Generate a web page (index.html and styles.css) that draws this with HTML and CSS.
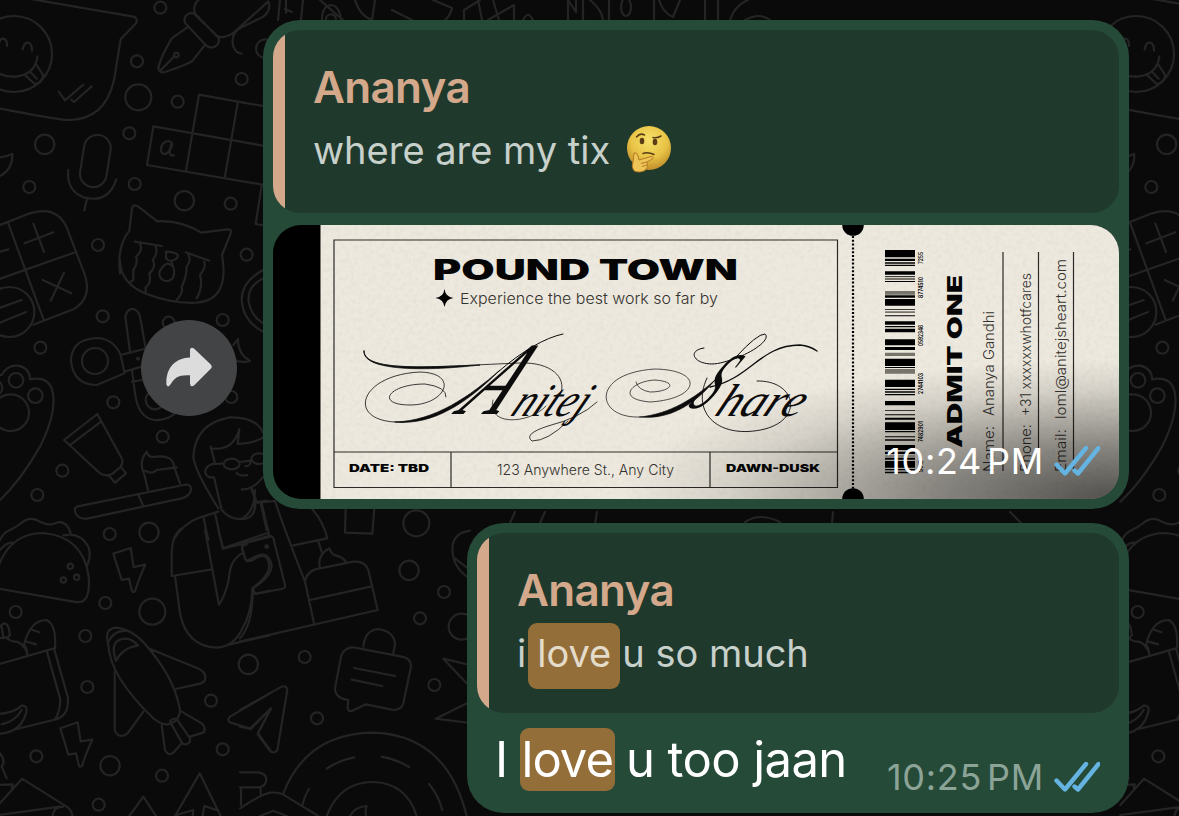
FILE: index.html
```html
<!DOCTYPE html>
<html lang="en">
<head>
<meta charset="utf-8">
<title>Chat</title>
<link rel="stylesheet" href="styles.css">
</head>
<body>
<svg class="wallpaper" viewBox="0 0 1179 816" aria-hidden="true">
  <defs>
    <g id="doodles">
      <g transform="scale(.33333)">
        <path d="M80-5L400 50Q415 55 408 70L362 118L342 240Q315 362 200 360Q180 360 0 326"/>
        <circle cx="42" cy="162" r="114"/>
        <path d="M-30 200Q0 232 45 230Q105 225 112 170M-5 140Q-2 115 10 116Q22 118 21 138M68 148Q72 126 84 128Q96 130 96 152M76 226L104 252Q125 252 130 226L108 192M90 215L110 236M176 275L195 301L250 254M214 299L222 306L275 259"/>
        <circle cx="481" cy="23" r="18"/><circle cx="411" cy="184" r="18"/><circle cx="415" cy="292" r="39"/><circle cx="533" cy="305" r="18"/><circle cx="725" cy="237" r="18"/><circle cx="388" cy="400" r="18"/><circle cx="134" cy="433" r="29"/><circle cx="88" cy="561" r="18"/><circle cx="404" cy="552" r="18"/><circle cx="553" cy="602" r="29"/><circle cx="692" cy="611" r="18"/><circle cx="294" cy="735" r="18"/><circle cx="740" cy="764" r="18"/><circle cx="796" cy="146" r="28"/>
        <path d="M562 82L515 115Q478 180 475 205Q478 220 495 216Q560 195 578 182L613 137M482 211L524 168M584 43Q570 34 558 47Q550 60 556 70L620 138Q640 150 655 130Q660 118 652 108ZM598-3Q575 18 586 42L650 108Q680 120 712 88L805 4Q815 30 790 50L725 82Q690 100 700 140Q708 160 725 161"/>
        <circle cx="529" cy="165" r="7"/>
        <path d="M597 284L800 320M460 379L800 439M441 495L800 556M460 379L441 495M597 284L558 512M714 304L674 534M785 556L767 672L800 678M483 448Q485 425 505 423Q525 428 510 450Q490 475 482 450M516 428Q500 470 521 466"/>
        <rect x="246" y="404" width="80" height="158" rx="40" transform="rotate(9 286 483)"/>
        <path d="M205 510Q198 570 250 592Q325 612 349 538M260 600L253 631M0 472Q20 470 37 462Q38 510 0 528"/>
        <path d="M-5 677L90 640Q170 615 200 682L247 805Q285 890 220 928L100 974M24 668L130 957M-5 838L222 758M100 671L132 756M74 730L160 697M0 755L25 748"/>
        <path d="M360 820Q350 740 388 692L396 625Q400 610 415 620L472 664Q540 660 604 698L682 688Q697 688 692 700L666 765Q690 900 590 908Q520 912 440 882Q360 850 360 780M404 725L486 738M420 732Q430 750 408 770Q415 790 400 810L400 840L388 848M467 740Q475 760 458 780Q470 800 448 820Q455 850 437 862V880M557 757L628 782M565 765Q575 780 560 800Q560 830 545 860Q550 880 530 900M612 785Q620 800 600 825Q610 860 590 895M498 755Q545 758 530 775Q510 790 498 775ZM485 805Q500 780 520 800M515 788Q525 815 522 820A22 22 0 1 1 485 805"/>
      </g>
      <g transform="translate(0 260) scale(.33333)">
        <path d="M128 60L214 100M192 38L152 122"/>
        <circle cx="28" cy="156" r="75"/><path d="M-5 145L65 120M-5 190L78 156"/>
        <circle cx="308" cy="169" r="18"/><circle cx="121" cy="263" r="18"/><circle cx="340" cy="427" r="18"/><circle cx="668" cy="180" r="18"/><circle cx="506" cy="188" r="18"/><circle cx="488" cy="530" r="18"/><circle cx="187" cy="632" r="18"/><circle cx="112" cy="705" r="18"/><circle cx="694" cy="411" r="18"/><circle cx="447" cy="817" r="29"/><circle cx="329" cy="822" r="18"/>
        <circle cx="285" cy="303" r="39"/>
        <path d="M362 285Q340 235 290 234Q212 238 213 305Q222 375 290 375L374 340ZM362 285L440 265M374 335L425 320M390 275L376 170Q382 145 400 147Q418 150 422 180L436 260M396 330L405 400Q415 475 465 480Q500 482 525 460M396 365L425 360"/>
        <circle cx="414" cy="296" r="3"/><circle cx="465" cy="420" r="28"/>
        <path d="M-5 345L5 345Q20 315 55 317Q90 325 90 358Q155 345 160 410Q165 470 120 560Q60 665-5 725"/>
        <circle cx="48" cy="361" r="22"/><circle cx="106" cy="407" r="22"/><circle cx="32" cy="458" r="55"/><circle cx="-15" cy="383" r="22"/>
        <path d="M292 462L192 540L300 640Q315 650 335 643L360 622Q372 608 365 595ZM300 487L213 553M325 645L345 668L378 640L362 620M230 740L550 675Q575 670 573 690Q570 708 545 715L265 775Q240 780 228 762Q220 745 230 740M415 705L430 738M444 690L432 640Q415 605 440 575Q445 595 470 590Q520 585 522 620L540 670M436 632Q455 645 470 630L530 622"/>
        <path d="M800 25Q725 60 725 120Q730 190 800 220M800 50Q740 75 746 125Q755 175 800 195M714 237Q712 280 750 303Q725 310 705 300M714 237L700 255"/>
        <path d="M632 560L645 610Q618 615 615 635Q620 655 642 652L665 750Q695 785 740 775Q770 765 765 720L757 688M632 565Q700 575 718 507L713 552Q770 550 800 525M790 520Q770 470 690 472Q585 490 580 590Q585 635 655 745M645 612L672 610M718 606L754 602M736 618Q750 620 752 605M710 638Q715 650 742 645M725 688Q760 690 790 650"/>
        <ellipse cx="695" cy="612" rx="24" ry="16"/><ellipse cx="778" cy="596" rx="24" ry="16"/>
        <path d="M520 840Q550 790 600 772L655 755M610 770L625 840M645 760L668 865L800 820M765 728L800 722M782 730L800 810"/>
      </g>
      <g transform="translate(0 530) scale(.33333)">
        <path d="M-5 110Q30 10 130 9Q250 20 266 140Q270 190 255 208Q245 220 220 215L-5 176M0 30Q10 8 30 0Q50-10 60-18Q90-45 120-25Q150-10 170-22Q200-30 212 10M190 16Q240 5 265 50Q275 75 262 105M0 60Q20 35 40 38"/>
        <circle cx="211" cy="109" r="8"/><circle cx="230" cy="142" r="8"/><circle cx="190" cy="150" r="8"/>
        <circle cx="47" cy="246" r="18"/><circle cx="316" cy="219" r="18"/><circle cx="457" cy="245" r="39"/><circle cx="256" cy="318" r="18"/><circle cx="262" cy="471" r="18"/><circle cx="633" cy="512" r="18"/><circle cx="745" cy="403" r="29"/><circle cx="668" cy="658" r="18"/><circle cx="109" cy="679" r="18"/><circle cx="330" cy="707" r="29"/><circle cx="486" cy="737" r="18"/><circle cx="296" cy="824" r="18"/>
        <path d="M340 71L392 54L401 111L436 104Q415 150 405 184Q396 190 394 175L387 146L365 150Z"/>
        <path d="M181 595L233 577L242 634L277 629Q256 675 246 708Q237 715 235 700L228 670L205 674Z"/>
        <path d="M-5 403L162 355L203 500Q210 560 160 570L50 597M140 362L180 505Q183 540 165 568M72 345Q90 270 140 270Q170 285 165 355M72 345Q80 350 82 375M92 298L118 307M80 335L108 343M-5 325L20 322Q30 335 50 335Q70 340 82 370M0 290Q15 270 25 290L30 315L20 325M5 290L10 322M-5 552Q40 550 65 527Q85 525 78 550Q60 610-5 611M5 583Q45 575 65 540"/>
        <path d="M325 345Q310 295 350 293Q405 300 450 360Q525 450 540 540Q540 570 510 582Q490 588 460 565Q330 440 325 345ZM325 335Q345 300 375 303M348 393Q325 325 380 326Q400 330 414 346Q365 355 348 393ZM445 355L600 418Q620 430 615 450Q610 460 590 463L528 477M344 425V600Q350 620 370 617Q380 615 385 607L430 545M485 585L495 660Q505 680 520 668L545 640M545 545L605 580Q620 595 610 608L570 620M510 575Q520 560 532 570L570 625Q572 640 558 643Q548 644 544 635Z"/>
        <path d="M515 138V75Q515 15 545-5M515 138L635 118M525 138L540 250Q560 350 650 353Q700 350 725 300Q755 250 757 180M615 0L657 225Q685 180 690 120Q700 80 730 68M655 0L670 56L810 20M740 43Q720 45 728 65L738 92Q750 98 770 83Q805 65 808 110Q805 140 757 175L765 192L810 182M690 343L810 316"/>
        <path d="M810 490L690 560Q680 570 690 577L750 596L810 538M810 540L774 610L810 660M-5 665Q20 690 5 710L20 745M-5 765L38 763L36 775M-5 825L66 746L200 830Q215 840 218 860M-5 855L180 830M157 860Q160 830 190 830M388 858L430 800L468 858M525 858L599 730L662 858M530 855L580 840L578 858M608 858L613 828L655 842"/>
      </g>
      <g transform="translate(240 490) scale(.33333)">
        <path d="M35 0L52 38L105 33Q130 110 195 275L222 400M65 40L88 138M0 88Q45 70 45 0M215 55Q250 95 262 145L160 166M235 155L245 185M240 235Q230 195 268 175Q275 195 290 197Q315 205 318 218M195 275Q200 240 240 235L340 215Q375 212 385 240L413 360L0 455M210 330L395 289M317 55L315 128L397 131L403 55M10 160L85 138Q95 135 100 145L135 285Q138 295 125 297L45 312L38 295Q95 260 95 225Q85 180 45 200L20 213Q15 210 5 165M38 295Q40 400 0 445"/>
        <circle cx="80" cy="170" r="4"/><circle cx="529" cy="100" r="39"/><circle cx="507" cy="241" r="29"/><circle cx="612" cy="306" r="18"/><circle cx="540" cy="385" r="18"/><circle cx="194" cy="501" r="18"/><circle cx="583" cy="585" r="18"/><circle cx="231" cy="685" r="18"/><circle cx="665" cy="410" r="39"/>
        <path d="M690 122Q630 130 638 190Q645 240 690 265M645 205L690 240M370 470Q375 420 415 417Q465 425 465 465L460 490M340 472L485 500Q515 505 513 530L490 640Q485 660 460 660L378 643L335 663Q322 665 323 650L325 630Q285 625 285 595L303 500Q310 475 335 472ZM342 534L466 558M335 569L427 588M690 525L610 506L690 590M690 635L587 686L690 699"/>
        <path d="M0 660L125 590Q140 585 142 600L112 780Q100 795 88 780L53 732L93 655L32 717L0 710M130 910Q200 730 400 728Q620 735 680 978M260 978Q300 875 400 876Q500 880 530 978M260 836Q300 810 343 802M425 800Q475 810 507 831M567 882Q595 915 607 960M207 897Q195 915 188 943M330 978Q345 950 380 948Q375 960 378 978M0 847H55Q78 850 79 868Q78 890 55 892H0M3 892V945M62 892V915M0 955Q60 915 90 908Q120 905 140 920L235 978M60 978L100 962L140 978"/>
      </g>
      <path d="M278 20L280 0M301 20L303 0M320 0Q338 16 343 20M322 20Q322 5 332 5Q340 7 341 20M326 20A5 5 0 0 1 336 19M355 0Q360 16 372 20L375 0M392 10L412 20M433 0L452 8Q450 16 445 20M464 20V10L480 0M478 0L482 20M493 0L499 20M488 20L514 5V20M523 20Q528 10 533 20M568 20V0L576 12V0M583 0V20M590 0Q602 10 603 20M609 20V0M654 20V0M659 0Q663 13 673 17L680 0M705 20V0M718 20V0M730 20Q735 5 748 0M745 20Q760 12 770 20M286 0V13M285 9L292 12"/>
      <ellipse cx="626" cy="7" rx="5" ry="9"/>
      <path d="M510 523L515 512M540 523L545 512M595 524L597 512M745 522Q760 512 780 522M832 524L833 512M1010 512L1022 524"/>
    </g>
  </defs>
  <use href="#doodles"/>
  <use href="#doodles" x="1122"/>
</svg>

<main class="chat">
  <div class="row">
    <button class="forward" aria-label="Forward">
      <svg width="46" height="40" viewBox="0 0 46 40"><path d="M24 3Q24.500-.8 28 1.500L44.500 17.300Q47 20 44.500 22L28.500 38Q24.500 41 24 36.500V28.300C13 27.500 8 31 4.800 37Q2 41.500.4 37.500C-.3 21 9 11 24 10.500Z"/></svg>
    </button>
    <article class="bubble bubble-media">
      <section class="quote">
        <h2 class="author">Ananya</h2>
        <p class="quoted">where are my tix
          <svg class="emoji" viewBox="0 0 46 48" role="img" aria-label="thinking face">
            <defs><radialGradient id="skin" cx=".5" cy=".32" r=".68"><stop offset="0" stop-color="#f6e06a"/><stop offset=".6" stop-color="#e8c345"/><stop offset="1" stop-color="#c08d2b"/></radialGradient></defs>
            <circle cx="23" cy="23" r="22" fill="url(#skin)"/>
            <path d="M10.500 12Q14 7.500 18.500 10M27 12.500Q31 13.500 35 11" class="face-line"/>
            <ellipse cx="16" cy="16" rx="2.300" ry="3.300" fill="#5b3c14"/><ellipse cx="29" cy="17" rx="2.300" ry="3.300" fill="#5b3c14"/>
            <path d="M17 28.500Q22 26.500 28 29.500" class="face-line"/>
            <path d="M8 28Q11 27 12 31L13 35L25 31.500Q28 31.500 26.500 34L21 37Q23 42 19 45.500Q14 48 9 46.500Q5 43 7 37Z" fill="#edc456" stroke="#b47a25" stroke-width="1"/>
            <path d="M15 38.500L21 37M16 41.500L21 40" stroke="#b47a25" fill="none"/>
          </svg>
        </p>
      </section>
      <figure class="photo">
        <svg class="ticket" viewBox="273 225 846 274">
          <defs>
            <filter id="grain" x="0" y="0" width="100%" height="100%">
              <feTurbulence type="fractalNoise" baseFrequency=".22" numOctaves="3" seed="4"/>
              <feColorMatrix values="0 0 0 0 .45  0 0 0 0 .4  0 0 0 0 .3  0 .9 0 0 -.36"/>
            </filter>
          </defs>
          <rect x="273" y="225" width="846" height="274" fill="#000"/>
          <rect x="320.500" y="225" width="800" height="274" fill="#ede9df"/>
          <rect x="320.500" y="225" width="800" height="274" filter="url(#grain)" opacity=".25"/>
          <path d="M334 240H837.500V487.500H334ZM334 452H837.500M451 452V487.500M710 452V487.500" class="rule"/>
          <text x="433" y="279.500" font-size="28.500" textLength="305" lengthAdjust="spacingAndGlyphs" class="wide">POUND TOWN</text>
          <path d="M444.500 289Q445.500 297 453.500 298Q445.500 299 444.500 307Q443.500 299 435.500 298Q443.500 297 444.500 289Z"/>
          <text x="460" y="304" font-size="15" textLength="258" lengthAdjust="spacingAndGlyphs" class="light">Experience the best work so far by</text>
          <g class="flourish">
            <path d="M364 351C364 374 440 366 520 363C552 362 566 378 561 392" stroke-width=".8"/>
            <path d="M364 351C363 372 430 367 480 365C430 371 362 372 364 351Z" class="swell"/>
            <path d="M404 422C345 425 356 375 420 372C460 373 446 405 410 405C375 405 388 384 425 384Q447 387 446 397" stroke-width=".8"/>
            <path d="M395 422C435 421 470 396 500 370C470 400 435 426 395 422Z" class="swell"/>
            <path d="M498 372Q535 340 563 334" stroke-width="1"/>
            <path d="M493 400C486 427 530 424 546 406" stroke-width=".7"/>
            <path d="M568 421Q548 441 532 441Q523 434 548 426Q580 418 597 402" stroke-width=".8"/>
            <path d="M640 417C595 419 590 373 655 369C705 370 700 399 650 402C615 399 632 381 655 380C680 382 670 392 650 392Q638 390 636 382" stroke-width=".7"/>
            <path d="M640 417C670 414 695 398 715 380C695 404 670 420 640 417Z" class="swell"/>
            <path d="M704 348C683 351 698 370 724 362C748 356 772 340 765 334Q757 334 736 357" stroke-width="1"/>
            <path d="M710 387C750 379 760 345 800 345Q810 346 817 351" stroke-width="1.300"/>
            <path d="M707 378C690 414 720 440 765 429C805 418 795 380 757 381" stroke-width=".9"/>
          </g>
          <g class="script">
            <text transform="translate(455 414) skewX(-38)" font-size="104" textLength="42" lengthAdjust="spacingAndGlyphs">A</text>
            <text transform="translate(509 416) skewX(-28)" font-size="47" textLength="73" lengthAdjust="spacingAndGlyphs">nitej</text>
            <text transform="translate(686 408) skewX(-38)" font-size="80" textLength="20" lengthAdjust="spacingAndGlyphs">S</text>
            <text transform="translate(713 416) skewX(-26)" font-size="46" textLength="86" lengthAdjust="spacingAndGlyphs">hare</text>
          </g>
          <text x="349" y="472.300" font-size="10.500" textLength="80" lengthAdjust="spacingAndGlyphs" class="wide">DATE: TBD</text>
          <text x="497" y="474.500" font-size="14.500" textLength="177" lengthAdjust="spacingAndGlyphs" class="light">123 Anywhere St., Any City</text>
          <text x="726" y="472.300" font-size="10.500" textLength="94" lengthAdjust="spacingAndGlyphs" class="wide">DAWN-DUSK</text>
          <path d="M853 236V489" stroke="#000" stroke-width="2.200" stroke-dasharray="2 1.800"/>
          <circle cx="853" cy="225" r="10.800"/><circle cx="853" cy="499" r="10.800"/>
          <g transform="translate(885 225) scale(.33333)">
            <path d="M0 75h90v22H0zM0 101h90v7H0zM0 112h90v4H0zM0 119h90v4H0zM0 139h90v10H0zM0 153h90v2H0zM0 168h90v3H0zM0 211h90v7H0zM0 222h90v20H0zM0 252h90v2H0zM0 271h90v3H0zM0 289h90v10H0zM0 303h90v4H0zM0 311h90v11H0zM0 343h90v18H0zM0 366h90v9H0zM0 401h90v22H0zM0 426h90v3H0zM0 464h90v22H0zM0 491h90v4H0zM0 499h90v4H0zM0 507h90v4H0zM0 528h90v13H0zM0 556h90v2H0zM0 568h90v3H0zM0 578h90v6H0zM0 592h90v23H0zM0 618h90v4H0zM0 634h90v3H0zM0 643h90v4H0zM0 660h90v15H0zM0 680h90v7H0zM0 692h90v2H0zM0 698h90v6H0zM0 708h90v20H0zM0 732h90v4H0zM0 740h90v5H0z"/>
            <path d="M0 158h90v7H0zM0 198h90v11H0zM0 259h90v5H0zM0 383h90v10H0zM0 432h90v14H0z" fill="#77746c"/>
          </g>
          <g class="serial" font-size="6">
            <text transform="translate(922.500 264) rotate(-90)" textLength="12" lengthAdjust="spacingAndGlyphs">7255</text>
            <text transform="translate(922.500 298) rotate(-90)" textLength="21" lengthAdjust="spacingAndGlyphs">8774510</text>
            <text transform="translate(922.500 346) rotate(-90)" textLength="21" lengthAdjust="spacingAndGlyphs">0592346</text>
            <text transform="translate(922.500 394) rotate(-90)" textLength="21" lengthAdjust="spacingAndGlyphs">2744103</text>
            <text transform="translate(922.500 442) rotate(-90)" textLength="21" lengthAdjust="spacingAndGlyphs">7482901</text>
            <text transform="translate(922.500 472) rotate(-90)" textLength="12" lengthAdjust="spacingAndGlyphs">9012</text>
          </g>
          <text transform="translate(961.500 448) rotate(-90)" font-size="20.500" textLength="173" lengthAdjust="spacingAndGlyphs" class="wide">ADMIT ONE</text>
          <g class="light" font-size="14.500">
            <text transform="translate(994 472) rotate(-90)" textLength="46" lengthAdjust="spacingAndGlyphs">Name:</text>
            <text transform="translate(994 416) rotate(-90)" textLength="105" lengthAdjust="spacingAndGlyphs">Ananya Gandhi</text>
            <text transform="translate(1031 472) rotate(-90)" textLength="48" lengthAdjust="spacingAndGlyphs">Phone:</text>
            <text transform="translate(1031 416) rotate(-90)" textLength="143" lengthAdjust="spacingAndGlyphs">+31 xxxxxxwhotfcares</text>
            <text transform="translate(1066 472) rotate(-90)" textLength="43" lengthAdjust="spacingAndGlyphs">Email:</text>
            <text transform="translate(1066 419) rotate(-90)" textLength="160" lengthAdjust="spacingAndGlyphs">loml@anitejsheart.com</text>
          </g>
          <path d="M1003 252V471M1038.500 252V471M1073.500 252V471" class="rule"/>
        </svg>
        <figcaption class="stamp stamp-over"><time>10:24<span class="thin-space"></span>PM</time>
          <svg class="ticks" viewBox="0 0 46 32"><path d="M2.500 19.500L11 28.500L32 3M20.500 25.500L24 28.500L44.500 3"/></svg>
        </figcaption>
      </figure>
    </article>
  </div>

  <div class="row">
    <article class="bubble bubble-text">
      <section class="quote">
        <h2 class="author">Ananya</h2>
        <p class="quoted">i<mark class="hit hit-quoted">love</mark>u so much</p>
      </section>
      <div class="message">
        <p class="body">I<mark class="hit hit-body">love</mark>u too jaan</p>
        <div class="stamp"><time>10:25<span class="thin-space"></span>PM</time>
          <svg class="ticks" viewBox="0 0 46 32"><path d="M2.500 19.500L11 28.500L32 3M20.500 25.500L24 28.500L44.500 3"/></svg>
        </div>
      </div>
    </article>
  </div>
</main>
</body>
</html>
```
FILE: styles.css
```css
* { box-sizing: border-box; }
body {
  margin: 0;
  height: 816px;
  overflow: hidden;
  background: #0a0a0a;
  font-family: Inter, "Liberation Sans", sans-serif;
}
.wallpaper {
  position: absolute;
  inset: 0;
  width: 1179px;
  height: 816px;
  z-index: -1;
  fill: none;
  stroke: #242424;
  stroke-width: 6.6;
  stroke-linecap: round;
  stroke-linejoin: round;
}
.wallpaper #doodles > path,
.wallpaper #doodles > ellipse { stroke-width: 2.2; }

.chat {
  display: flex;
  flex-direction: column;
  gap: 14px;
  padding: 20px 50px 0 0;
}
.row {
  display: flex;
  justify-content: flex-end;
  align-items: flex-end;
  gap: 26px;
}
.forward {
  display: grid;
  place-items: center;
  width: 96px;
  height: 96px;
  margin: 0 0 93px;
  padding: 0 1px 2px 0;
  border: 0;
  border-radius: 50%;
  background: #434446;
}
.forward svg { fill: #dcdcdc; }

.bubble {
  padding: 10px;
  border-radius: 37px;
  background: #264a38;
}
.bubble-media { width: 866px; height: 489px; }
.bubble-text { width: 662px; height: 290px; }

.quote {
  overflow: hidden;
  padding: 29px 0 0 40px;
  border-radius: 27px;
  background: linear-gradient(90deg, #d3a88b 12px, #1f3a2d 12px);
}
.bubble-media .quote { height: 183px; }
.bubble-text .quote { height: 180px; }
.author {
  margin: 0;
  color: #d3a88b;
  font-size: 44px;
  font-weight: 600;
  line-height: 56px;
  letter-spacing: -0.7px;
}
.quoted {
  margin: 6px 0 0;
  color: #c7d0ca;
  font-size: 38px;
  line-height: 58px;
  white-space: nowrap;
}
.emoji {
  width: 46px;
  height: 48px;
  margin-left: 5px;
  vertical-align: -9px;
}
.face-line { fill: none; stroke: #5b3c14; stroke-width: 1.5; stroke-linecap: round; }

.photo {
  position: relative;
  overflow: hidden;
  height: 274px;
  margin: 12px 0 0;
  border-radius: 28px;
}
.ticket { display: block; width: 846px; height: 274px; }
.photo::after {
  content: "";
  position: absolute;
  inset: 0;
  background: radial-gradient(ellipse 500px 140px at 100% 100%, rgba(0,0,0,.66), rgba(0,0,0,.42) 38%, rgba(0,0,0,.1) 78%, transparent);
}
.rule { fill: none; stroke: #2b2a27; stroke-width: 1.2; }
.wide { font-weight: 900; fill: #050505; }
.light { font-weight: 300; fill: #35332f; }
.flourish { fill: none; stroke: #0c0c0c; stroke-linecap: round; }
.swell { fill: #0c0c0c; stroke-width: .7; }
.script { font-family: "Liberation Serif", serif; font-style: italic; fill: #0c0c0c; }
.serial { font-weight: 600; }

.stamp {
  display: flex;
  align-items: center;
  gap: 10px;
  color: #8ba497;
  font-size: 36px;
  line-height: 40px;
  white-space: nowrap;
}
.stamp time { letter-spacing: 0.7px; }
.stamp-over {
  position: absolute;
  right: 19px;
  bottom: 18px;
  z-index: 1;
  color: #fff;
}
.thin-space { display: inline-block; width: 5px; }
.ticks {
  width: 46px;
  height: 32px;
  fill: none;
  stroke: #64b3e0;
  stroke-width: 4.4;
  stroke-linecap: round;
  stroke-linejoin: round;
}

.message {
  display: flex;
  justify-content: space-between;
  align-items: flex-start;
  padding: 16px 19px 0 18px;
}
.message .stamp { margin-top: 28px; }
.body {
  margin: 0;
  color: #fff;
  font-size: 49px;
  line-height: 62px;
  letter-spacing: -0.6px;
  white-space: nowrap;
}
.hit { color: inherit; background: #946e38; border-radius: 9px; }
.hit-quoted {
  display: inline-block;
  height: 66px;
  margin: -1px 2px -7px;
  padding: 0 9px;
  vertical-align: top;
  line-height: 60px;
  color: #e4dccb;
}
.hit-body {
  display: inline-block;
  height: 63px;
  margin: -1px 11px 0 12px;
  padding: 0 2px;
  vertical-align: top;
  line-height: 64px;
  letter-spacing: -1px;
}
```
